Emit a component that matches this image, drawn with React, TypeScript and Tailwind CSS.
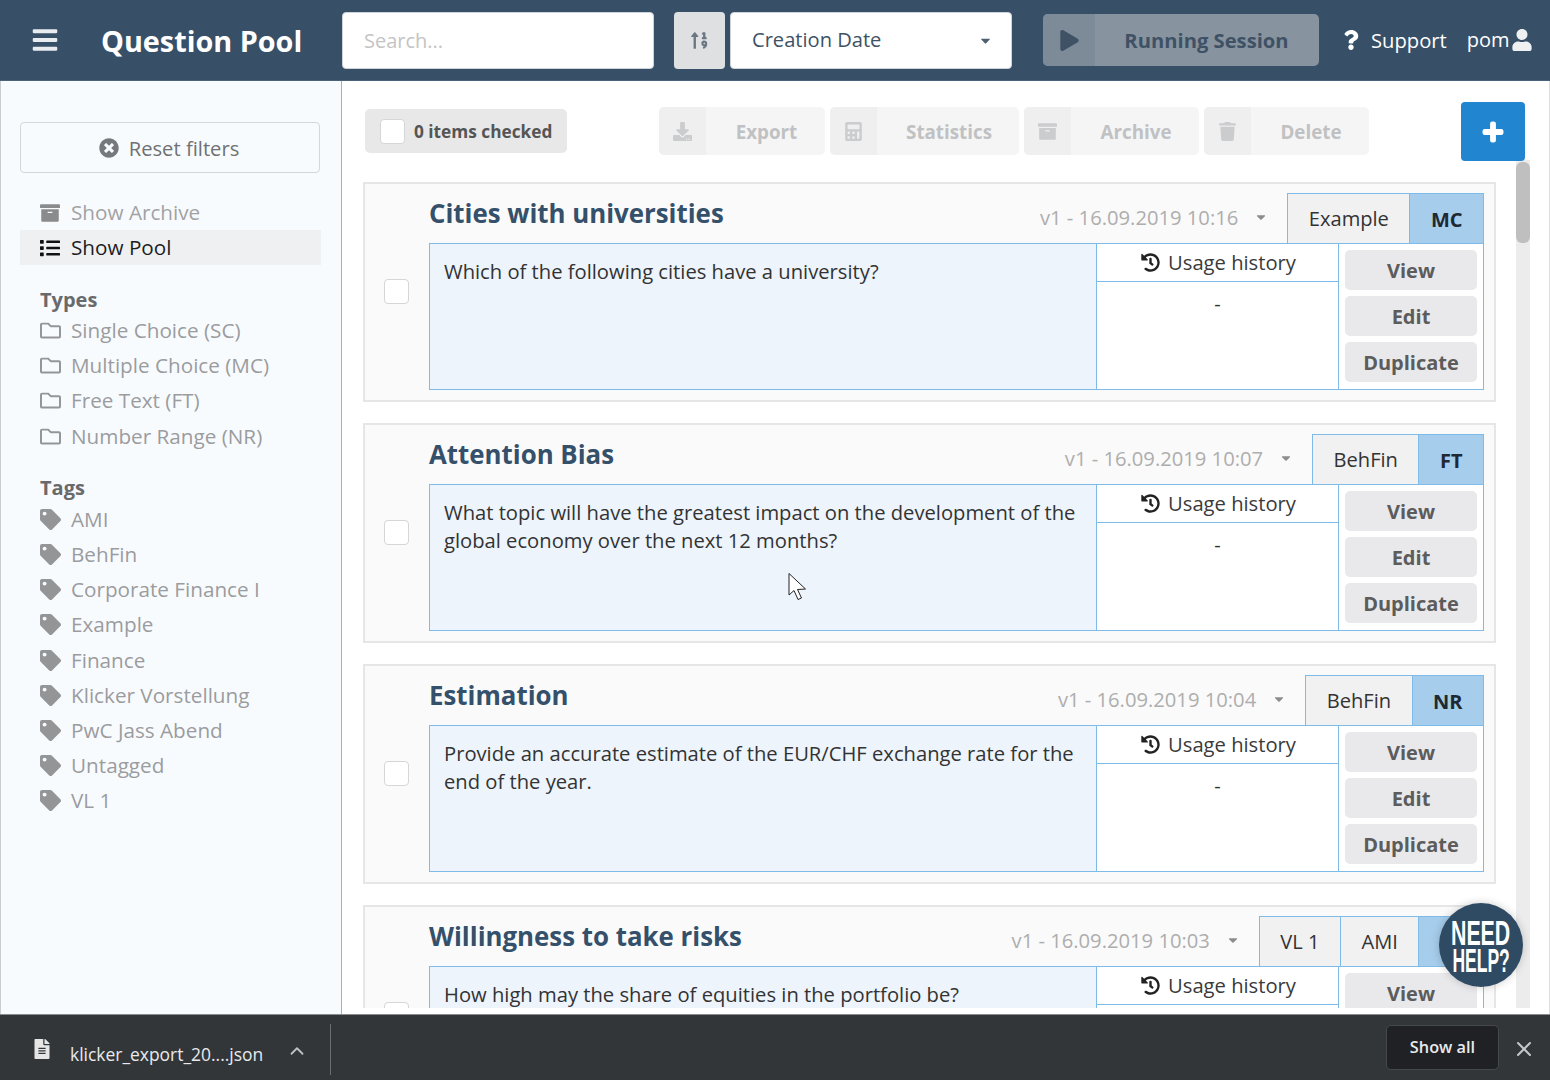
import React from "react";
import {
  FaBars, FaTimesCircle, FaArchive, FaList, FaRegFolder, FaTag, FaDownload, FaCalculator,
  FaTrash, FaPlus, FaPlay, FaQuestion, FaUser, FaHistory, FaSortNumericUp, FaCaretDown, FaFileAlt,
} from "react-icons/fa";
import { FiChevronUp, FiX } from "react-icons/fi";

const types = ["Single Choice (SC)", "Multiple Choice (MC)", "Free Text (FT)", "Number Range (NR)"];
const tags = ["AMI", "BehFin", "Corporate Finance I", "Example", "Finance", "Klicker Vorstellung", "PwC Jass Abend", "Untagged", "VL 1"];

const cards = [
  { title: "Cities with universities", date: "v1 - 16.09.2019 10:16", tags: ["Example"], type: "MC", text: "Which of the following cities have a university?" },
  { title: "Attention Bias", date: "v1 - 16.09.2019 10:07", tags: ["BehFin"], type: "FT", text: "What topic will have the greatest impact on the development of the global economy over the next 12 months?" },
  { title: "Estimation", date: "v1 - 16.09.2019 10:04", tags: ["BehFin"], type: "NR", text: "Provide an accurate estimate of the EUR/CHF exchange rate for the end of the year." },
  { title: "Willingness to take risks", date: "v1 - 16.09.2019 10:03", tags: ["VL 1", "AMI"], type: "FT", text: "How high may the share of equities in the portfolio be?" },
];

function ToolButton({ icon, label, width }: { icon: React.ReactNode; label: string; width: string }) {
  return (
    <div className={`flex h-[48px] items-stretch rounded-[5px] bg-[#f5f5f6] text-[#c0c1c2] ${width}`}>
      <div className="flex w-[47px] items-center justify-center rounded-l-[5px] bg-[#efeff0] text-[19px] text-[#cbcccd]">{icon}</div>
      <div className="flex flex-1 items-center justify-center pl-[2px] pt-[2px] text-[18.8px] font-bold">{label}</div>
    </div>
  );
}

function Card({ c }: { c: (typeof cards)[number] }) {
  return (
    <div className="h-[220px] w-[1133px] shrink-0 border-2 border-[#e6e6e7] bg-[#fafafa] pl-[64px] pr-[10px] pt-[9px]">
      <div className="flex h-[50px] items-start">
        <div className="flex-1 text-[25.85px] font-bold leading-[40px] text-[#34506a]">{c.title}</div>
        <div className="mr-[19px] mt-[-1px] flex h-[50px] items-center text-[20.2px] text-[#aeaeae]">
          {c.date}
          <FaCaretDown className="ml-[16px] text-[14px] text-[#8d8d8d]" />
        </div>
        <div className="flex h-[51px] border border-[#7fbbe8]">
          {c.tags.map((t) => (
            <div key={t} className="flex items-center border-r border-[#7fbbe8] bg-[#f1f1f2] px-[20.5px] pt-[2px] text-[20.1px] text-[#333]">{t}</div>
          ))}
          <div className="flex items-center bg-[#a6cdeb] px-[20.5px] pt-[2px] text-[20px] font-bold text-[#1f2933]">{c.type}</div>
        </div>
      </div>
      <div className="flex h-[147px] border border-[#7fbbe8]">
        <div className="w-[667px] border-r border-[#7fbbe8] bg-[#edf4fc] px-[14px] pt-[13px] text-[20.2px] leading-[28px] text-[#333]">{c.text}</div>
        <div className="w-[242px] border-r border-[#7fbbe8] bg-white">
          <div className="flex h-[38px] items-center justify-center gap-[8px] border-b border-[#7fbbe8] pl-[2px] text-[20.2px] text-[#3a3a3a]">
            <FaHistory className="text-[19px] text-[#222]" />
            Usage history
          </div>
          <div className="pt-[8px] text-center text-[20px] leading-[28px] text-[#333]">-</div>
        </div>
        <div className="flex flex-1 flex-col gap-[6px] bg-white px-[6px] pt-[6px]">
          {["View", "Edit", "Duplicate"].map((b) => (
            <div key={b} className="flex h-[40px] shrink-0 items-center justify-center rounded-[5px] bg-[#e9e9eb] pt-[1px] text-[20px] font-bold text-[#5c5c5c]">{b}</div>
          ))}
        </div>
      </div>
    </div>
  );
}

function SideItem({ icon, label }: { icon: React.ReactNode; label: string }) {
  return (
    <div className="flex h-[35.2px] items-center gap-[10px] pl-[19px] text-[20.7px] text-[#9b9c9e]">
      <span className="flex w-[22px] justify-center text-[21px] text-[#949597]">{icon}</span>
      {label}
    </div>
  );
}

export default function App() {
  return (
    <div className="relative flex h-[1080px] w-[1550px] flex-col overflow-hidden bg-white font-['Open_Sans',sans-serif]">
      {/* Top bar */}
      <header className="flex h-[81px] shrink-0 items-center border-b border-[#4a6277] bg-[#375068]">
        <FaBars className="ml-[31px] text-[28px] text-[#e9ecef]" />
        <div className="ml-[42px] w-[241px] pt-[2px] text-[28.8px] font-bold text-white">Question Pool</div>
        <div className="flex h-[57px] w-[312px] items-center rounded-[4px] border border-[#cfd4da] bg-white pl-[21px] pt-[2px] text-[20px] text-[#c4c4c4]">Search...</div>
        <div className="ml-[20px] flex h-[57px] w-[51px] items-center justify-center rounded-[4px] bg-[#dfe0e2] text-[19px] text-[#6b7883]">
          <FaSortNumericUp />
        </div>
        <div className="ml-[5px] flex h-[57px] w-[282px] items-center justify-between rounded-[4px] border border-[#cfd4da] bg-white pl-[21px] pr-[18px] text-[20.1px] text-[#3d5266]">
          Creation Date
          <FaCaretDown className="text-[15px] text-[#4d5f70]" />
        </div>
        <div className="ml-[31px] flex h-[52px] w-[276px] items-stretch rounded-[5px] bg-[#87949f] text-[#3f5165]">
          <div className="flex w-[52px] items-center justify-center rounded-l-[5px] bg-[#7d8b98] text-[21px]"><FaPlay /></div>
          <div className="flex flex-1 items-center justify-center pt-[1px] pr-[1px] text-[20.2px] font-bold">Running Session</div>
        </div>
        <FaQuestion className="ml-[22px] text-[20px] text-white" />
        <div className="ml-[10px] text-[20.2px] text-white">Support</div>
        <div className="ml-[20px] text-[20px] text-white">pom</div>
        <FaUser className="ml-[1px] text-[22px] text-[#eef0f2]" />
      </header>

      <div className="flex h-[933px] shrink-0">
        {/* Sidebar */}
        <aside className="w-[342px] shrink-0 border-l border-r border-l-[#c9ccd0] border-r-[#7fbbe8] bg-[#f8fbfe]">
          <div className="mx-[19px] mt-[41px] flex h-[51px] w-[300px] items-center justify-center gap-[10px] rounded-[4px] border border-[#d3d7dc] pr-[2px] pt-[1px] text-[20.2px] text-[#6f7173]">
            <FaTimesCircle className="text-[20px] text-[#77787a]" />
            Reset filters
          </div>
          <div className="mt-[22px] flex h-[35px] items-center gap-[10px] pl-[38px] text-[20.7px] text-[#a1a2a4]">
            <span className="flex w-[22px] justify-center text-[20px] text-[#8a8b8d]"><FaArchive /></span>
            Show Archive
          </div>
          <div className="mx-[19px] flex h-[35px] w-[301px] items-center gap-[10px] bg-[#eff0f2] pl-[19px] text-[20.7px] text-[#1d1d1f]">
            <span className="flex w-[22px] justify-center text-[20px] text-[#111]"><FaList /></span>
            Show Pool
          </div>
          <div className="mx-[19px]">
            <div className="mt-[20px] pl-[20px] text-[20px] font-bold leading-[30px] text-[#696a6c]">Types</div>
            <div className="mt-[-2px]">
              {types.map((t) => <SideItem key={t} icon={<FaRegFolder />} label={t} />)}
            </div>
            <div className="mt-[19px] pl-[20px] text-[20px] font-bold leading-[30px] text-[#696a6c]">Tags</div>
            <div className="mt-[-1px]">
              {tags.map((t) => <SideItem key={t} icon={<FaTag />} label={t} />)}
            </div>
          </div>
        </aside>

        {/* Main */}
        <main className="flex min-w-0 flex-1 flex-col border-r border-[#dcdcdc] bg-white">
          <div className="relative flex h-[79px] shrink-0 items-center pl-[23px] pt-[21px]">
            <div className="flex h-[44px] w-[202px] items-center rounded-[5px] bg-[#e8e8e9] pl-[15px] text-[17.25px] font-bold text-[#555]">
              <span className="mr-[9px] h-[25px] w-[25px] rounded-[4px] border border-[#d6d6d6] bg-white" />
              <span className="pt-[2px]">0 items checked</span>
            </div>
            <div className="ml-[92px] flex gap-[5px]">
              <ToolButton icon={<FaDownload />} label="Export" width="w-[166px]" />
              <ToolButton icon={<FaCalculator />} label="Statistics" width="w-[189px]" />
              <ToolButton icon={<FaArchive />} label="Archive" width="w-[175px]" />
              <ToolButton icon={<FaTrash />} label="Delete" width="w-[165px]" />
            </div>
            <div className="ml-[92px] mt-[1px] flex h-[59px] w-[64px] items-center justify-center rounded-[4px] bg-[#2185d0] text-[22px] text-white">
              <FaPlus className="[stroke:currentColor] stroke-[40px]" />
            </div>
          </div>
          <div className="flex h-[848px] shrink-0">
            <div className="flex w-[1174px] shrink-0 flex-col gap-[21px] overflow-hidden pl-[21px] pt-[22px]">
              {cards.map((c) => (
                <div key={c.title} className="relative shrink-0">
                  <Card c={c} />
                  <span className="absolute left-[21px] top-[97px] h-[25px] w-[25px] rounded-[4px] border border-[#d6d6d6] bg-white" />
                </div>
              ))}
            </div>
            <div className="w-[14px] shrink-0 bg-[#ececec] pt-[2px]">
              <div className="h-[81px] rounded-[6px] bg-[#bfbfbf]" />
            </div>
          </div>
          <div className="flex-1 bg-white" />
        </main>
      </div>

      {/* Download bar */}
      <footer className="flex h-[66px] shrink-0 items-center border-t border-[#8a8c8e] bg-[#323639] text-white">
        <FaFileAlt className="ml-[32px] mt-[3px] text-[20px] text-[#e6e6e6]" />
        <div className="ml-[18px] mt-[13px] w-[216px] text-[17.45px] text-[#e8eaed]">klicker_export_20....json</div>
        <FiChevronUp className="mt-[6px] text-[22px] text-[#bdbfc1]" />
        <div className="ml-[22px] mt-[4px] h-[51px] w-px bg-[#6b6e71]" />
        <div className="flex-1" />
        <div className="flex h-[45px] w-[113px] items-center justify-center rounded-[5px] border border-[#46494c] bg-[#202124] text-[16.3px] font-semibold text-[#e8eaed]">Show all</div>
        <FiX className="ml-[13px] mr-[14px] mt-[2px] text-[24px] text-[#c6c7c9]" />
      </footer>

      {/* Mouse cursor */}
      <svg className="absolute left-[787px] top-[572px]" width="22" height="30" viewBox="0 0 22 30">
        <path d="M2 1.5 L2 23 L7 18.5 L11 27.5 L14.5 26 L10.5 17.5 L18.5 17 Z" fill="#fff" stroke="#222" strokeWidth="1" />
      </svg>

      {/* Need help bubble */}
      <div className="absolute left-[1439px] top-[903px] flex h-[84px] w-[84px] flex-col items-center justify-center rounded-full bg-[#2f4a63] pt-[3px] font-['Liberation_Sans',sans-serif] font-bold text-white shadow-[0_0_8px_rgba(0,0,0,0.2)]">
        <span className="scale-x-[0.61] text-[35px] leading-[28px]">NEED</span>
        <span className="scale-x-[0.53] whitespace-nowrap text-[33px] leading-[28px]">HELP?</span>
      </div>
    </div>
  );
}
